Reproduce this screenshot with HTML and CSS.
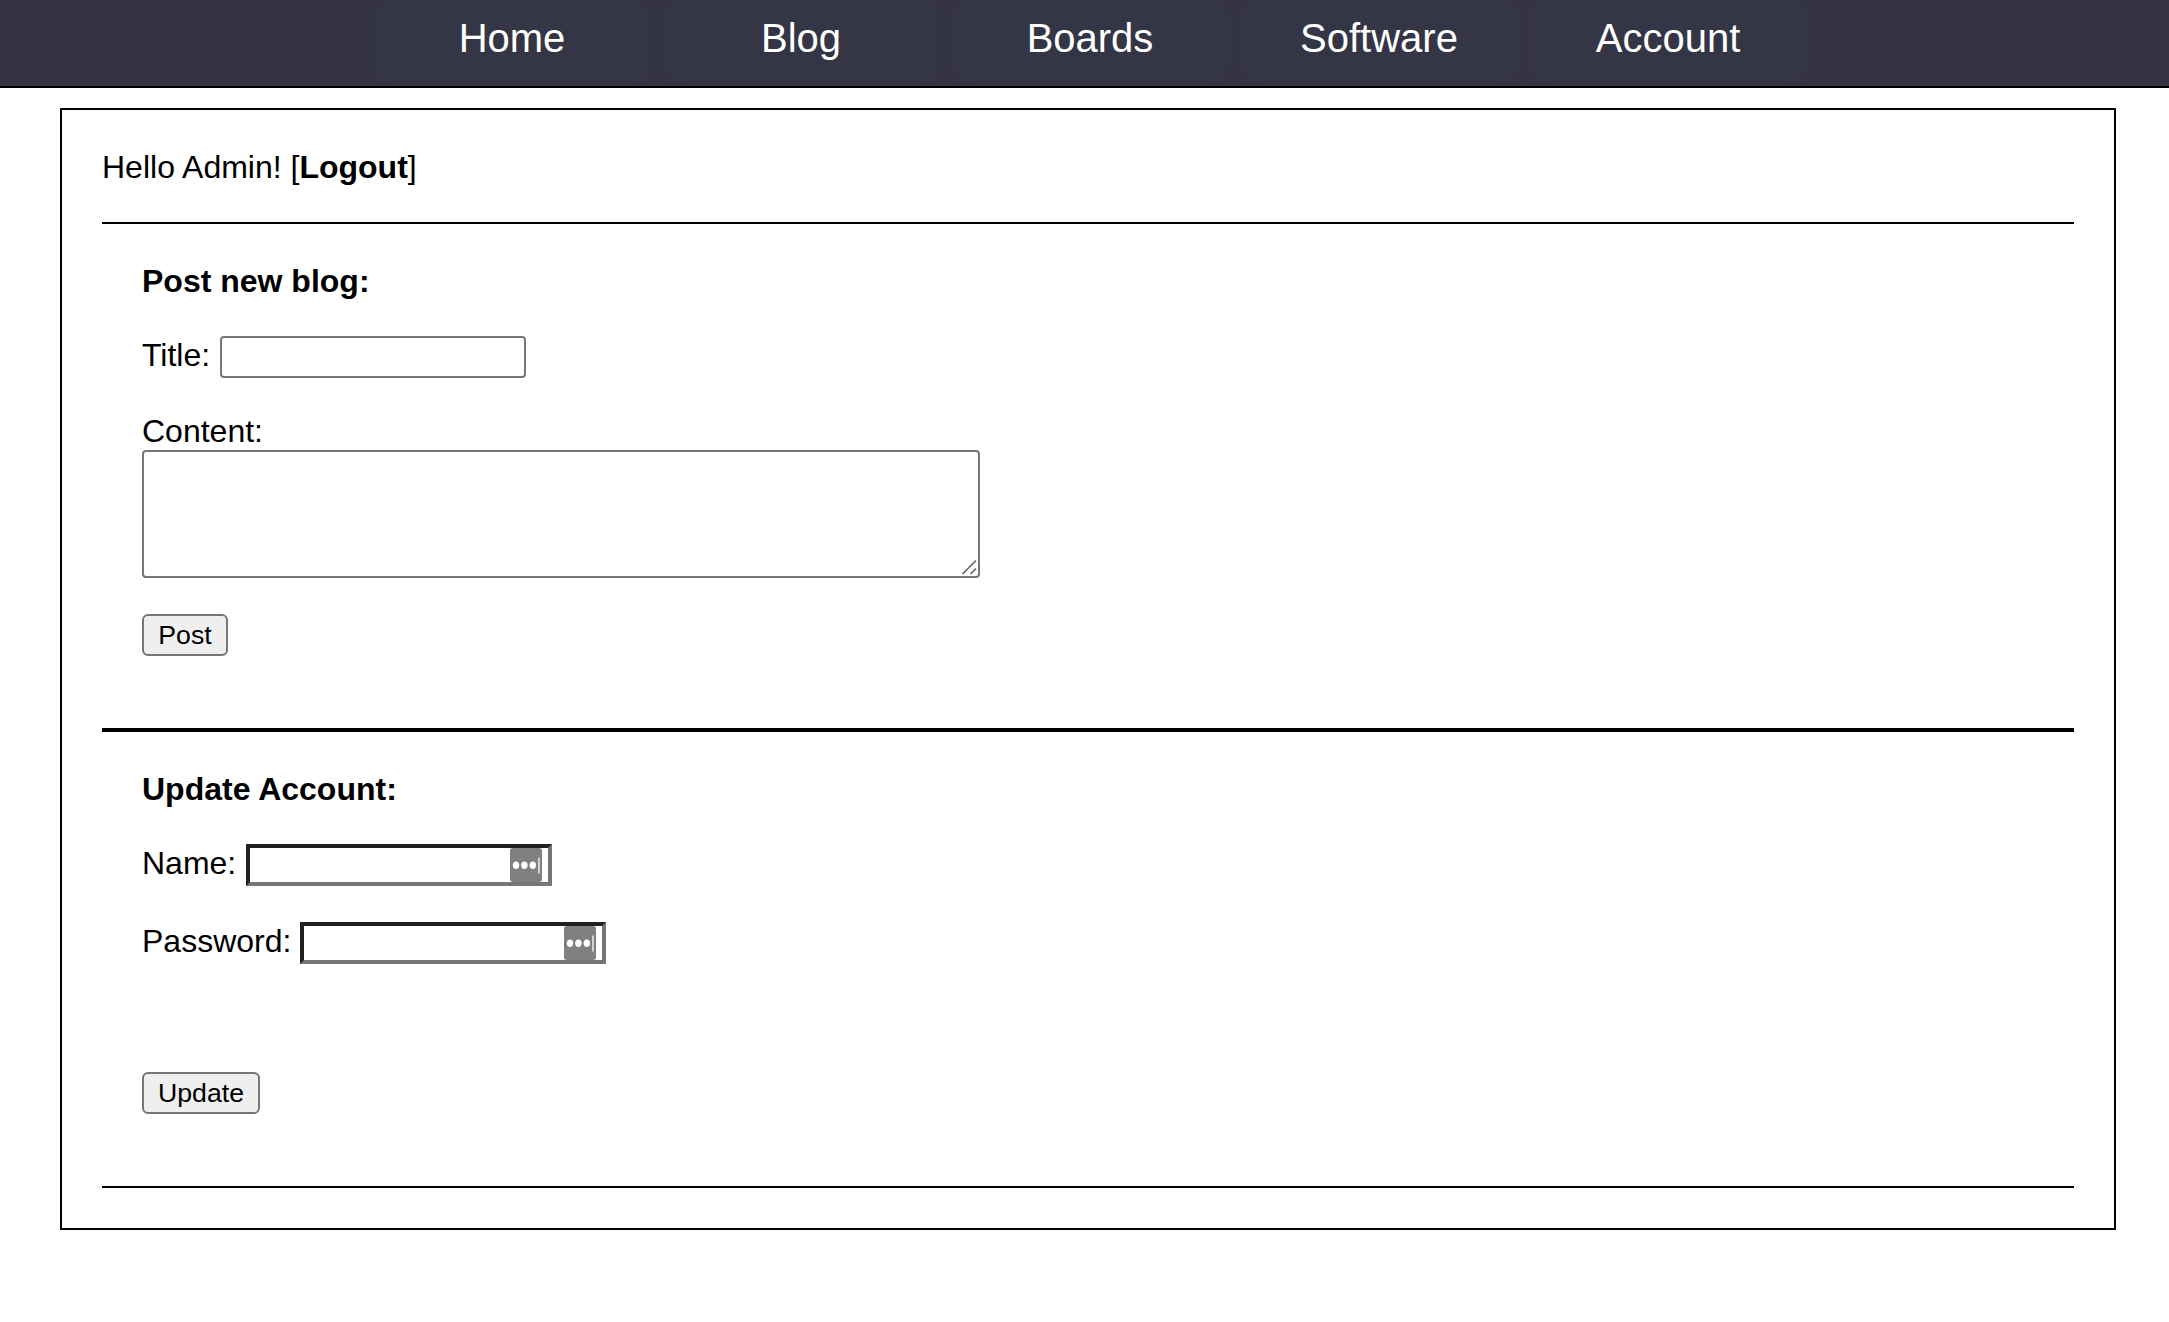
FILE: index.html
```html
<!DOCTYPE html>
<html lang="en">
<head>
<meta charset="utf-8">
<title>Account</title>
<link rel="stylesheet" href="styles.css">
</head>
<body>
<nav class="nav">
  <a class="nav-item">Home</a>
  <a class="nav-item">Blog</a>
  <a class="nav-item">Boards</a>
  <a class="nav-item">Software</a>
  <a class="nav-item">Account</a>
</nav>
<main class="panel">
  <div class="greeting">Hello Admin! [<b>Logout</b>]</div>
  <form class="section section-blog">
    <h2 class="heading">Post new blog:</h2>
    <div class="row row-title"><label for="title">Title:</label><input class="field" id="title" type="text"></div>
    <label class="content-label" for="content">Content:</label>
    <div class="area-wrap">
      <textarea class="area" id="content"></textarea>
      <svg class="grip" viewBox="0 0 16 16"><path d="M1.5 15 15 1.5M9.5 15 15 9.5" fill="none" stroke="#666" stroke-width="1.7"/></svg>
    </div>
    <button class="button button-post" type="button">Post</button>
  </form>
  <form class="section section-account">
    <h2 class="heading">Update Account:</h2>
    <div class="row row-name"><label for="name">Name:</label>
      <span class="secure"><input class="field field-inset" id="name" type="text"><svg class="key" viewBox="0 0 32 34"><rect width="32" height="34" rx="3" fill="#808080"/><g fill="#fff"><ellipse cx="6" cy="17.3" rx="3.2" ry="3.7"/><ellipse cx="14.4" cy="17.3" rx="3.2" ry="3.7"/><ellipse cx="22.8" cy="17.3" rx="3.2" ry="3.7"/><rect x="28.3" y="9.5" width="1.3" height="16"/></g></svg></span>
    </div>
    <div class="row row-password"><label for="password">Password:</label>
      <span class="secure"><input class="field field-inset" id="password" type="password"><svg class="key" viewBox="0 0 32 34"><rect width="32" height="34" rx="3" fill="#808080"/><g fill="#fff"><ellipse cx="6" cy="17.3" rx="3.2" ry="3.7"/><ellipse cx="14.4" cy="17.3" rx="3.2" ry="3.7"/><ellipse cx="22.8" cy="17.3" rx="3.2" ry="3.7"/><rect x="28.3" y="9.5" width="1.3" height="16"/></g></svg></span>
    </div>
    <button class="button button-update" type="button">Update</button>
  </form>
</main>
</body>
</html>
```
FILE: styles.css
```css
* { box-sizing: border-box; }
body {
  margin: 0;
  background: #fff;
  color: #000;
  font: 32px/36px "Liberation Sans", Arial, sans-serif;
}
.nav {
  display: flex;
  justify-content: center;
  gap: 13px;
  height: 88px;
  padding-left: 11px;
  overflow: hidden;
  background: #363443;
  border-bottom: 2px solid #000;
}
.nav-item {
  width: 276px;
  height: 80px;
  padding-top: 15px;
  border-radius: 16px;
  background: #353645;
  box-shadow: 0 0 8px #353645;
  color: #fff;
  font-size: 40px;
  line-height: 46px;
  text-align: center;
}
.panel {
  width: 2056px;
  height: 1122px;
  margin: 20px 0 0 60px;
  padding: 38px 40px 40px;
  border: 2px solid #000;
}
.greeting {
  height: 76px;
  padding-top: 1px;
  border-bottom: 2px solid #000;
}
.section {
  display: flex;
  flex-direction: column;
  align-items: flex-start;
  padding: 39px 40px 0;
}
.section-blog {
  height: 508px;
  border-bottom: 4px solid #000;
}
.section-account {
  height: 456px;
  border-bottom: 2px solid #000;
}
.heading {
  margin: 0;
  font-size: 32px;
  line-height: 36px;
}
.row {
  display: flex;
  height: 42px;
  line-height: 38px;
}
.row-title { margin-top: 37px; gap: 10px; }
.row-name { margin-top: 37px; gap: 10px; }
.row-password { margin-top: 36px; gap: 9px; }
.field {
  width: 306px;
  height: 42px;
  margin: 0;
  padding: 2px 4px;
  border: 2px solid #767676;
  border-radius: 4px;
  background: #fff;
  font: 26.67px "Liberation Sans", Arial, sans-serif;
}
.field-inset {
  display: block;
  border-width: 4px;
  border-style: solid;
  border-color: #212121 #767676 #767676 #212121;
  border-radius: 0;
}
.secure { position: relative; }
.key {
  position: absolute;
  top: 4px;
  right: 10px;
  width: 32px;
  height: 34px;
}
.content-label { margin-top: 35px; }
.area-wrap {
  position: relative;
  width: 838px;
  height: 128px;
  margin-top: 1px;
}
.area {
  display: block;
  width: 100%;
  height: 100%;
  margin: 0;
  border: 2px solid #767676;
  border-radius: 4px;
  background: #fff;
  resize: none;
}
.grip {
  position: absolute;
  right: 3px;
  bottom: 3px;
  width: 16px;
  height: 16px;
}
.button {
  height: 42px;
  margin: 0;
  padding: 0;
  border: 2px solid #767676;
  border-radius: 6px;
  background: #efefef;
  color: #000;
  font: 26.67px/30px "Liberation Sans", Arial, sans-serif;
}
.button-post { width: 86px; margin-top: 36px; }
.button-update { width: 118px; margin-top: 108px; }
```
